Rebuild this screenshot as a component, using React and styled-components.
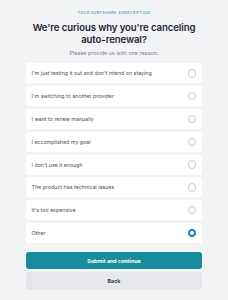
import React, { useState } from "react"
import styled, { createGlobalStyle } from "styled-components"

const GlobalStyle = createGlobalStyle`
  html, body {
    margin: 0;
    padding: 0;
    background: #f2f3f5;
  }
  * {
    box-sizing: border-box;
  }
`

const Page = styled.main`
  width: 228px;
  min-height: 300px;
  display: flex;
  flex-direction: column;
  align-items: center;
  padding-top: 11px;
  font-family: Inter, "Noto Sans", sans-serif;
`

const Eyebrow = styled.div`
  font-size: 3.6px;
  font-weight: 600;
  letter-spacing: 0.12em;
  text-transform: uppercase;
  color: #5aa9b5;
  line-height: 5px;
`

const Title = styled.h1`
  margin: 5.5px 0 0;
  font-size: 9.6px;
  line-height: 12.7px;
  font-weight: 600;
  color: #1f2633;
  text-align: center;
  letter-spacing: -0.01em;
`

const Subtitle = styled.p`
  margin: 3.5px 0 0;
  font-size: 5.4px;
  line-height: 7px;
  color: #7d8290;
`

const List = styled.div`
  width: 176px;
  margin-top: 6px;
  display: flex;
  flex-direction: column;
  gap: 2.8px;
`

const Option = styled.label`
  height: 20px;
  display: flex;
  align-items: center;
  justify-content: space-between;
  padding: 0 6px 0 5.5px;
  background: #ffffff;
  border-radius: 2.5px;
  cursor: pointer;
`

const OptionText = styled.span`
  font-size: 5.3px;
  color: #4a505c;
`

const Radio = styled.span`
  width: 8.5px;
  height: 8.5px;
  border-radius: 50%;
  flex-shrink: 0;
  border: ${p => (p.checked ? "2.6px solid #178c9c" : "0.6px solid #c9ccd2")};
  background: #ffffff;
`

const Actions = styled.div`
  width: 176px;
  margin-top: 9px;
  display: flex;
  flex-direction: column;
  gap: 3px;
`

const Button = styled.button`
  height: 17.5px;
  border: none;
  border-radius: 3px;
  font-family: inherit;
  font-size: 5.3px;
  font-weight: 700;
  background: ${p => (p.primary ? "#178c9c" : "#e6e7ea")};
  color: ${p => (p.primary ? "#ffffff" : "#3b404b")};
  cursor: pointer;
`

const reasons = [
  "I'm just testing it out and don't intend on staying",
  "I'm switching to another provider",
  "I want to renew manually",
  "I accomplished my goal",
  "I don't use it enough",
  "The product has technical issues",
  "It's too expensive",
  "Other",
]

const App = () => {
  const [selected, setSelected] = useState("Other")

  return (
    <>
      <GlobalStyle />
      <Page>
        <Eyebrow>Your Surfshark subscription</Eyebrow>
        <Title>
          We're curious why you're canceling
          <br />
          auto-renewal?
        </Title>
        <Subtitle>Please provide us with one reason.</Subtitle>
        <List>
          {reasons.map(r => (
            <Option key={r} onClick={() => setSelected(r)}>
              <OptionText>{r}</OptionText>
              <Radio checked={selected === r} />
            </Option>
          ))}
        </List>
        <Actions>
          <Button primary>Submit and continue</Button>
          <Button>Back</Button>
        </Actions>
      </Page>
    </>
  )
}

export default App
